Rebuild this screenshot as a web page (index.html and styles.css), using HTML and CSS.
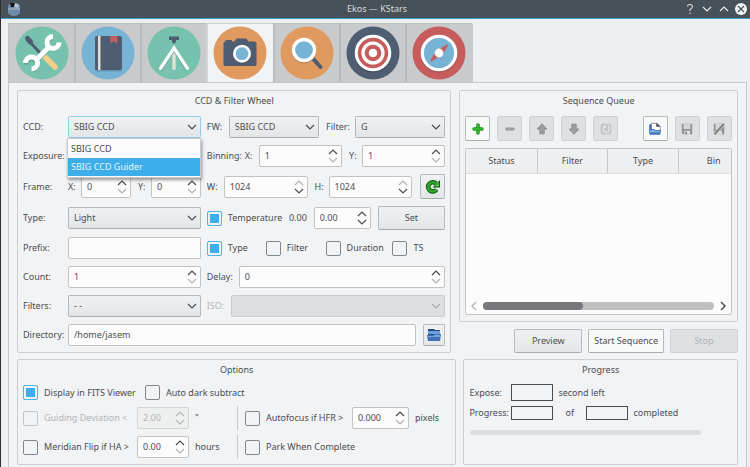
FILE: index.html
```html
<!DOCTYPE html>
<html lang="en">
<head>
<meta charset="utf-8">
<title>Ekos — KStars</title>
<link rel="stylesheet" href="styles.css">
</head>
<body>
<svg class="defs" aria-hidden="true">
  <symbol id="chevron" viewBox="0 0 10 6"><path d="M1 1l4 4 4-4" fill="none" stroke="currentColor" stroke-width="1.2"/></symbol>
  <symbol id="up" viewBox="0 0 10 6"><path d="M1 5l4-4 4 4" fill="none" stroke="currentColor" stroke-width="1.2"/></symbol>
</svg>
<div class="window">
  <header class="titlebar">
    <svg class="app-icon" viewBox="0 0 14 14"><path d="M1 3Q7-2 13 3V11Q11 14 7 14T1 11Z" fill="#6f8aa6"/><path d="M1 6h12v2H1z" fill="#8aa2ba"/><path d="M3 1l5 0-1 4-3 0z" fill="#10161c"/><path d="M8 1l4 2-1 3-4-1z" fill="#b4c2cf"/></svg>
    <h1>Ekos — KStars</h1>
    <div class="window-buttons">
      <button type="button" aria-label="Help"><svg viewBox="0 0 12 12"><path d="M3.500 3.500Q3.500 1.500 6 1.500T8.500 3.800Q8.500 5 6 6.500V8M6 9.500V11" fill="none" stroke="#d5d8da" stroke-width="1.100"/></svg></button>
      <button type="button" aria-label="Minimize"><svg viewBox="0 0 12 12"><path d="M2 4l4 4 4-4" fill="none" stroke="#e8eaeb" stroke-width="1.200"/></svg></button>
      <button type="button" aria-label="Maximize"><svg viewBox="0 0 12 12"><path d="M2 8l4-4 4 4" fill="none" stroke="#e8eaeb" stroke-width="1.200"/></svg></button>
      <button type="button" aria-label="Close"><svg viewBox="0 0 12 12"><circle cx="6" cy="6" r="6" fill="#f4f5f5"/><path d="M3 3l6 6M9 3l-6 6" stroke="#475057" stroke-width="1.200"/></svg></button>
    </div>
  </header>

  <nav class="tabs">
    <button type="button" class="tab" aria-label="Setup"><svg viewBox="0 0 54 54"><circle cx="27" cy="27" r="26.500" fill="#76c2af"/><path d="M12.500 12.500l3 4L25 27" fill="none" stroke="#4f5d73" stroke-width="3" stroke-linecap="round"/><path d="M12.500 12.500l3 3.500" stroke="#4f5d73" stroke-width="5" stroke-linecap="round"/><path d="M29 30L40 41" stroke="#f5cf87" stroke-width="5.500" stroke-linecap="round"/><g fill="none" stroke="#5fa896" stroke-width="5" transform="translate(0 1)"><path d="M38 11A5.500 5.500 0 1 0 43.500 16.500M34 21L21 34M16.500 43A5.500 5.500 0 1 0 11 37.500"/></g><g fill="none" stroke="#fff" stroke-width="5"><path d="M38 10.500A6 6 0 1 0 44 16.500M34 21L21 34M16.500 43A6 6 0 1 0 10.500 37"/></g></svg></button>
    <button type="button" class="tab" aria-label="Scheduler"><svg viewBox="0 0 54 54"><circle cx="27" cy="27" r="26.500" fill="#77b3d4"/><rect x="14" y="11" width="27" height="34.500" rx="2" fill="#6394b0"/><rect x="14" y="10" width="27" height="34" rx="2" fill="#4f5d73"/><path d="M17 10h2.500v34H17z" fill="#e0e0d1"/><path d="M29.300 10h7v8l-3.500-3-3.500 3z" fill="#c75c5c"/></svg></button>
    <button type="button" class="tab" aria-label="Mount"><svg viewBox="0 0 54 54"><circle cx="27" cy="27" r="26.500" fill="#76c2af"/><path d="M22 10.500h10v3.500h-3v2l-2 2-2-2v-2h-3z" fill="#4f5d73"/><path d="M25.300 25h3.400v18q-1.700 2-3.400 0z" fill="#e0e0d1"/><path d="M13.500 43.500L27 22.500 40.500 43.500" fill="none" stroke="#5fa896" stroke-width="3" transform="translate(0 1)"/><path d="M13.500 42.500L27 22 40.500 42.500" fill="none" stroke="#fff" stroke-width="3.200" stroke-linecap="round"/></svg></button>
    <button type="button" class="tab active" aria-label="Capture"><svg viewBox="0 0 54 54"><circle cx="27" cy="27" r="26.500" fill="#e0995e"/><path d="M10.500 17.500q0-2 2-2V14h6.500v1.500h2.500l2-3h10l2 3h6q2 0 2 2v21q0 1.500-2 1.500H12.500q-2 0-2-1.500z" fill="#4f5d73"/><circle cx="29" cy="28.500" r="9" fill="#3d495b"/><circle cx="29" cy="27.700" r="7.700" fill="#77b3d4" stroke="#fff" stroke-width="2.600"/></svg></button>
    <button type="button" class="tab" aria-label="Alignment"><svg viewBox="0 0 54 54"><circle cx="27" cy="27" r="26.500" fill="#e0995e"/><path d="M32.500 32L40.500 41" stroke="#4f5d73" stroke-width="4" stroke-linecap="round"/><circle cx="24" cy="25.200" r="12.200" fill="#b87e4e"/><circle cx="24" cy="24" r="10.500" fill="#77b3d4" stroke="#fff" stroke-width="3.400"/></svg></button>
    <button type="button" class="tab" aria-label="Guide"><svg viewBox="0 0 54 54"><circle cx="27" cy="27" r="26.500" fill="#4f5d73"/><circle cx="27" cy="28.200" r="18.300" fill="#3b4656"/><circle cx="27" cy="27" r="18.300" fill="#fff"/><circle cx="27" cy="27" r="15.200" fill="#c75c5c"/><circle cx="27" cy="27" r="11.600" fill="#fff"/><circle cx="27" cy="27" r="8.300" fill="#c75c5c"/><circle cx="27" cy="27" r="4.300" fill="#fff"/></svg></button>
    <button type="button" class="tab" aria-label="Focus"><svg viewBox="0 0 54 54"><circle cx="27" cy="27" r="26.500" fill="#c75c5c"/><circle cx="27" cy="28.200" r="18.300" fill="#a04c4c"/><circle cx="27" cy="27" r="16.700" fill="#77b3d4" stroke="#fff" stroke-width="3.200"/><path d="M36 18q0 3-6.500 11.500L18.500 36q0-3 6-11.500z" fill="#c75c5c"/><circle cx="27" cy="27" r="4.400" fill="#fff"/></svg></button>
  </nav>

  <main class="page">
    <div class="row-top">
      <section class="panel ccd">
        <h2>CCD &amp; Filter Wheel</h2>
        <div class="form">
          <label for="ccd">CCD:</label>
          <div class="combo-anchor">
            <span class="combo focus"><select id="ccd"><option>SBIG CCD</option><option>SBIG CCD Guider</option></select><svg><use href="#chevron"/></svg></span>
            <ul class="popup" role="listbox" aria-label="CCD">
              <li role="option">SBIG CCD</li>
              <li role="option" class="selected" aria-selected="true">SBIG CCD Guider</li>
            </ul>
          </div>
          <div class="cells filter-row">
            <label for="fw">FW:</label>
            <span class="combo"><select id="fw"><option>SBIG CCD</option></select><svg><use href="#chevron"/></svg></span>
            <label for="filter" class="mid">Filter:</label>
            <span class="combo"><select id="filter"><option>G</option></select><svg><use href="#chevron"/></svg></span>
          </div>

          <label for="exposure">Exposure:</label>
          <span class="spin"><input id="exposure" type="text"></span>
          <div class="cells binning-row">
            <span>Binning:</span>
            <label for="binx">X:</label>
            <span class="spin"><input id="binx" type="text" value="1"><span class="arrows"><svg><use href="#up"/></svg><svg class="off"><use href="#chevron"/></svg></span></span>
            <label for="biny" class="mid">Y:</label>
            <span class="spin"><input id="biny" type="text" value="1"><span class="arrows"><svg><use href="#up"/></svg><svg class="off"><use href="#chevron"/></svg></span></span>
          </div>

          <span>Frame:</span>
          <div class="cells xy-row">
            <label for="fx">X:</label>
            <span class="spin"><input id="fx" type="text" value="0"><span class="arrows"><svg><use href="#up"/></svg><svg class="off"><use href="#chevron"/></svg></span></span>
            <label for="fy" class="mid">Y:</label>
            <span class="spin"><input id="fy" type="text" value="0"><span class="arrows"><svg><use href="#up"/></svg><svg class="off"><use href="#chevron"/></svg></span></span>
          </div>
          <div class="cells size-row">
            <label for="w">W:</label>
            <span class="spin"><input id="w" type="text" value="1024"><span class="arrows"><svg class="off"><use href="#up"/></svg><svg><use href="#chevron"/></svg></span></span>
            <label for="h" class="mid">H:</label>
            <span class="spin"><input id="h" type="text" value="1024"><span class="arrows"><svg class="off"><use href="#up"/></svg><svg><use href="#chevron"/></svg></span></span>
            <button type="button" class="btn tool" aria-label="Reset frame"><svg viewBox="0 0 16 16"><path d="M11.500 10.500A4.600 4.600 0 1 1 11 4.500" fill="none" stroke="#0b5c0b" stroke-width="4.600"/><path d="M15 1v7.500H7.500z" fill="#0b5c0b"/><path d="M11.500 10.500A4.600 4.600 0 1 1 11 4.500" fill="none" stroke="#2fa52b" stroke-width="2.600"/><path d="M14 3v4.500H9.500z" fill="#4fc648"/></svg></button>
          </div>

          <label for="type">Type:</label>
          <span class="combo"><select id="type"><option>Light</option></select><svg><use href="#chevron"/></svg></span>
          <div class="cells temp-row">
            <div class="temp"><label class="check"><input type="checkbox" checked>Temperature</label><span>0.00</span></div>
            <span class="spin"><input type="text" value="0.00" aria-label="Target temperature"><span class="arrows"><svg><use href="#up"/></svg><svg><use href="#chevron"/></svg></span></span>
            <button type="button" class="btn">Set</button>
          </div>

          <label for="prefix">Prefix:</label>
          <span class="spin"><input id="prefix" type="text"></span>
          <div class="cells prefix-row">
            <label class="check"><input type="checkbox" checked>Type</label>
            <label class="check"><input type="checkbox">Filter</label>
            <label class="check"><input type="checkbox">Duration</label>
            <label class="check"><input type="checkbox">TS</label>
          </div>

          <label for="count">Count:</label>
          <span class="spin"><input id="count" type="text" value="1"><span class="arrows"><svg><use href="#up"/></svg><svg class="off"><use href="#chevron"/></svg></span></span>
          <div class="cells delay-row">
            <label for="delay">Delay:</label>
            <span class="spin"><input id="delay" type="text" value="0"><span class="arrows"><svg><use href="#up"/></svg><svg class="off"><use href="#chevron"/></svg></span></span>
          </div>

          <label for="filters">Filters:</label>
          <span class="combo"><select id="filters"><option>- -</option></select><svg><use href="#chevron"/></svg></span>
          <div class="cells iso-row">
            <label for="iso" class="disabled">ISO:</label>
            <span class="combo disabled"><select id="iso" disabled></select><svg><use href="#chevron"/></svg></span>
          </div>

          <label for="dir">Directory:</label>
          <div class="cells dir-row">
            <span class="spin"><input id="dir" type="text" value="/home/jasem"></span>
            <button type="button" class="btn tool small" aria-label="Browse"><svg viewBox="0 0 16 16"><path d="M2 3V2h6l1 1h5v9H2z" fill="#204a80"/><path d="M2 4h12v3H2z" fill="#6d9fdb"/><path d="M1 8h6l1-1h7l-1 7H2z" fill="#3f72b5"/><path d="M2 9h6l1-1h5v2H2z" fill="#78a7de"/></svg></button>
          </div>
        </div>
      </section>

      <div class="right-col">
        <section class="panel queue">
          <h2>Sequence Queue</h2>
          <div class="toolbar">
            <button type="button" class="btn tool" aria-label="Add job"><svg viewBox="0 0 16 16"><path d="M8 3.500v9M3.500 8h9" stroke="#168a12" stroke-width="4" stroke-linecap="round"/><path d="M8 3.500v9M3.500 8h9" stroke="#35b52c" stroke-width="2.400" stroke-linecap="round"/></svg></button>
            <button type="button" class="btn tool" disabled aria-label="Remove job"><svg viewBox="0 0 16 16"><path d="M4.500 8h7" stroke="#909294" stroke-width="3.400" stroke-linecap="round"/><path d="M4.500 8h7" stroke="#a9abad" stroke-width="1.400"/></svg></button>
            <button type="button" class="btn tool" disabled aria-label="Move up"><svg viewBox="0 0 16 16"><path d="M8 2l5.500 6H10.500v5.500h-5V8H2.500z" fill="#9c9ea0" stroke="#858789"/></svg></button>
            <button type="button" class="btn tool" disabled aria-label="Move down"><svg viewBox="0 0 16 16"><path d="M8 14L2.500 8H5.500V2.500h5V8h3z" fill="#9c9ea0" stroke="#858789"/></svg></button>
            <button type="button" class="btn tool" disabled aria-label="Reset jobs"><svg viewBox="0 0 16 16"><rect x="2" y="2" width="12" height="12" rx="2" fill="#c2c4c5"/><path d="M6 5.500A3.600 3.600 0 1 0 11 6V4" fill="none" stroke="#e4e5e6" stroke-width="1.600"/><path d="M4 4h4v4z" fill="#e4e5e6"/></svg></button>
            <button type="button" class="btn tool file" aria-label="Open sequence"><svg viewBox="0 0 16 16"><path d="M1.500 2.500h4V13h-4z" fill="#3b6cad"/><path d="M4 1.500h6l4 3.500v5H4z" fill="#fff" stroke="#7b8798"/><path d="M9.500 1v4.500H14z" fill="#333f50"/><path d="M1 8h6l1.500 1.500H15L14 14.500H2z" fill="#3f72b5"/><path d="M2 9h5l1.500 1.500H14V12H2z" fill="#84b0e5"/></svg></button>
            <button type="button" class="btn tool" disabled aria-label="Save sequence"><svg viewBox="0 0 16 16"><path d="M2 2h12v12H3.500L2 12.500z" fill="#909294"/><path d="M4 2h8v6H4z" fill="#d3d4d5"/><path d="M5 10h6.500v4H5z" fill="#dfe0e1"/><path d="M6 11h2v3H6z" fill="#858789"/></svg></button>
            <button type="button" class="btn tool" disabled aria-label="Save sequence as"><svg viewBox="0 0 16 16"><path d="M2 2h12v12H3.500L2 12.500z" fill="#909294"/><path d="M4 2h7v6H4z" fill="#d3d4d5"/><path d="M5 10h6.500v4H5z" fill="#dfe0e1"/><path d="M3 14L13 2.500" stroke="#dcdddd" stroke-width="4"/><path d="M3 14L13.500 2" stroke="#7f8183" stroke-width="2.200"/></svg></button>
          </div>
          <div class="table-box">
            <table><thead><tr><th>Status</th><th>Filter</th><th>Type</th><th>Bin</th></tr></thead></table>
            <div class="scroll">
              <svg class="off" viewBox="0 0 6 10"><path d="M5 1L1 5l4 4" fill="none" stroke="currentColor" stroke-width="1.300"/></svg>
              <div class="track"><div class="thumb"></div></div>
              <svg viewBox="0 0 6 10"><path d="M1 1l4 4-4 4" fill="none" stroke="currentColor" stroke-width="1.500"/></svg>
            </div>
          </div>
        </section>
        <div class="actions">
          <button type="button" class="btn">Preview</button>
          <button type="button" class="btn light">Start Sequence</button>
          <button type="button" class="btn" disabled>Stop</button>
        </div>
      </div>
    </div>

    <div class="row-bottom">
      <section class="panel options">
        <h2>Options</h2>
        <div class="opt-first">
          <label class="check"><input type="checkbox" checked>Display in FITS Viewer</label>
          <label class="check"><input type="checkbox">Auto dark subtract</label>
        </div>
        <div class="opt-row">
          <label class="check disabled"><input type="checkbox" disabled>Guiding Deviation &lt;</label>
          <span class="spin disabled"><input type="text" value="2.00" disabled aria-label="Guiding deviation"><span class="arrows"><svg><use href="#up"/></svg><svg><use href="#chevron"/></svg></span></span>
          <span class="unit">"</span>
          <label class="check ruled"><input type="checkbox">Autofocus if HFR &gt;</label>
          <span class="spin"><input type="text" value="0.000" aria-label="HFR limit"><span class="arrows"><svg><use href="#up"/></svg><svg class="off"><use href="#chevron"/></svg></span></span>
          <span class="unit">pixels</span>
        </div>
        <div class="opt-row">
          <label class="check"><input type="checkbox">Meridian Flip if HA &gt;</label>
          <span class="spin"><input type="text" value="0.00" aria-label="Hour angle limit"><span class="arrows"><svg><use href="#up"/></svg><svg class="off"><use href="#chevron"/></svg></span></span>
          <span class="unit">hours</span>
          <label class="check ruled">
            <input type="checkbox">Park When Complete</label>
        </div>
      </section>

      <section class="panel progress">
        <h2>Progress</h2>
        <div class="status"><span>Expose:</span><output class="expose"></output><span class="after">second left</span></div>
        <div class="status"><span>Progress:</span><output></output><span class="of">of</span><output></output><span class="after">completed</span></div>
        <progress value="0" max="100" aria-label="Sequence progress"></progress>
      </section>
    </div>
  </main>
</div>
</body>
</html>
```
FILE: styles.css
```css
* { box-sizing: border-box; }

body {
  margin: 0;
  background: #eeeff1;
  color: #4a4d50;
  font: 9px/12px "Noto Sans", "Open Sans", sans-serif;
}

input, select, button { font: inherit; color: inherit; margin: 0; min-width: 0; }
h1, h2 { margin: 0; font-size: inherit; font-weight: 400; text-align: center; }
svg { display: block; }
.defs { position: absolute; width: 0; height: 0; }

.window { min-height: 100vh; border-left: 1px solid #2b2d30; display: flex; flex-direction: column; }

/* Title bar */
.titlebar {
  display: grid;
  grid-template-columns: 1fr auto 1fr;
  align-items: center;
  height: 19px;
  padding: 0 3px 1px 6px;
  background: #485058;
  border-bottom: 1px solid #3a9bd0;
  color: #d9dcde;
}
.app-icon { width: 14px; height: 14px; }
.window-buttons { display: flex; gap: 5px; justify-content: flex-end; }
.window-buttons button { width: 12px; height: 12px; padding: 0; border: 0; background: none; }
.window-buttons svg { width: 12px; height: 12px; }

/* Module tabs */
.tabs { display: flex; margin: 4px 0 0 7px; }
.tab {
  display: flex;
  justify-content: center;
  padding: 2px 5px;
  border: 0;
  border-top: 1px solid #bbbdbf;
  border-left: 2px solid #b8babc;
  background: #c9cacc;
}
.tab:first-child { border-left-width: 1px; border-left-color: #bfc1c3; padding-left: 6px; }
.tab:last-child { border-radius: 0 2px 0 0; padding-right: 7px; }
.tab svg { width: 54px; height: 54px; }
.tab.active { background: #f2f3f5; border-left-color: #d5d6d8; border-top-color: #cfd0d2; margin-bottom: -1px; padding-right: 6px; }

.page {
  flex: 1;
  margin: 0 3px 0 7px;
  padding: 7px 8px 2px;
  border: 1px solid #c6c8ca;
  border-bottom: 0;
  background: #f2f3f5;
}
.row-top, .row-bottom { display: grid; }
.row-top { grid-template-columns: 435fr 279fr; gap: 8px; }
.row-bottom { grid-template-columns: 440fr 275fr; gap: 7px; margin-top: 6px; }
.right-col { display: flex; flex-direction: column; gap: 7px; min-width: 0; }

.panel { padding: 4px 5px 6px; border: 1px solid #cccecf; border-radius: 2px; min-width: 0; }
.panel h2 { margin-bottom: 9px; }

/* Camera form */
.form { display: grid; grid-template-columns: 45px 133fr 245fr; row-gap: 7px; align-items: center; }
.form > :nth-child(3n + 3) { margin-left: 6px; }
.form > .dir-row { grid-column: 2 / 4; margin-left: 0; }
.cells { display: grid; align-items: center; }
.mid { padding-left: 7px; }
.filter-row { grid-template-columns: 22px 1fr 36px 1fr; }
.binning-row { grid-template-columns: 38px 14px 1fr 20px 1fr; }
.xy-row { grid-template-columns: 13px 1fr 20px 1fr; }
.size-row { grid-template-columns: 17px 1fr 21px 1fr 33px; }
.size-row .btn { justify-self: end; }
.temp-row { grid-template-columns: 100px 57fr 68fr; column-gap: 7px; }
.temp { display: flex; justify-content: space-between; align-items: center; }
.prefix-row { grid-template-columns: 59fr 60fr 67fr 53fr; }
.delay-row { grid-template-columns: 32px 1fr; }
.iso-row { grid-template-columns: 24px 1fr; }
.dir-row { grid-template-columns: 1fr 22px; column-gap: 7px; }

/* Fields */
.spin, .combo { display: flex; align-items: center; position: relative; height: 22px; min-width: 0; }
.spin input, .combo select {
  appearance: none;
  width: 100%;
  height: 22px;
  padding: 0 14px 1px 5px;
  border: 1px solid #c1c3c5;
  border-radius: 2px;
  background: #fcfcfc;
  outline: 0;
}
.combo select {
  border-color: #b5b7b9;
  border-bottom-color: #a9abad;
  background: linear-gradient(#f0f1f2, #e4e5e7);
  opacity: 1;
}
.combo > svg { position: absolute; right: 4px; width: 10px; height: 6px; pointer-events: none; }
.combo.focus select { border-color: #93cee9; }
.combo.disabled { color: #a8aaac; }
.combo.disabled select { border-color: #c9cbcd; background: #dddee0; }
.arrows { position: absolute; right: 4px; display: flex; flex-direction: column; gap: 2px; color: #4a4d50; }
.arrows svg { width: 10px; height: 6px; }
.off { color: #b0b2b4; }
.disabled, .disabled .arrows { color: #b4b6b8; }
.spin.disabled input { background: #eeefef; border-color: #d2d4d5; color: #b4b6b8; }

.combo-anchor { position: relative; }
.popup {
  position: absolute;
  z-index: 1;
  top: 22px;
  left: -1px;
  right: 0;
  margin: 0;
  padding: 1px 0;
  border: 1px solid #c9cbcd;
  background: #fcfcfc;
  box-shadow: 1px 2px 3px rgba(0, 0, 0, 0.4);
  list-style: none;
}
.popup li { padding: 3px; line-height: 12px; }
.popup .selected { background: #3daee9; color: #e8f5fc; }

/* Check boxes */
.check { display: flex; align-items: center; gap: 6px; white-space: nowrap; }
.check input {
  appearance: none;
  flex: none;
  width: 15px;
  height: 15px;
  border: 1px solid #85878a;
  border-radius: 2px;
}
.check input:checked { border-color: #53b4e4; background: #3daee9; box-shadow: inset 0 0 0 2px #f2f3f5; }
.check input:disabled { border-color: #c3c5c7; }

/* Buttons */
.btn {
  height: 24px;
  padding: 0 5px 1px;
  border: 1px solid #b7b9bb;
  border-bottom-color: #a9abad;
  border-radius: 2px;
  background: linear-gradient(#f0f1f2, #e5e6e8);
  white-space: nowrap;
}
.btn:disabled { border-color: #cfd1d2; background: #dfe0e2; color: #b0b2b4; }
.btn.light { background: #f8f9f9; }
.tool { display: grid; place-items: center; width: 25px; height: 25px; padding: 0; }
.tool svg { width: 16px; height: 16px; }
.tool.small { width: 22px; height: 22px; }
.toolbar { display: flex; gap: 7px; margin-bottom: 7px; }
.toolbar .btn:first-child, .toolbar .file { background: #f7f8f8; }
.toolbar .file { margin-left: auto; }
.toolbar svg { width: 14px; height: 14px; }
.actions { display: flex; justify-content: flex-end; gap: 6px; }
.actions .btn { min-width: 68px; }

/* Queue table */
.queue { flex: 1; display: flex; flex-direction: column; }
.table-box {
  flex: 1;
  display: flex;
  flex-direction: column;
  justify-content: space-between;
  overflow: hidden;
  border: 1px solid #c3c5c7;
  border-radius: 2px;
  background: #fcfcfc;
}
table { width: 107%; table-layout: fixed; border-collapse: collapse; }
th {
  height: 24px;
  padding: 0;
  border-right: 1px solid #c6c8ca;
  border-bottom: 1px solid #dcddde;
  background: #eeeff1;
  font-weight: 400;
}
.scroll { display: flex; align-items: center; gap: 6px; padding: 0 5px 3px; }
.scroll svg { width: 6px; height: 10px; }
.track { flex: 1; height: 8px; border-radius: 4px; background: #bfc0c1; }
.thumb { width: 43%; height: 8px; border-radius: 4px; background: #77787b; }

/* Options */
.opt-first { display: grid; grid-template-columns: 122px 1fr; }
.opt-row {
  display: grid;
  grid-template-columns: 114px 52px 48px 115px 57px 1fr;
  align-items: center;
  margin-top: 7px;
}
.unit { padding-left: 6px; }
.ruled { height: 24px; margin: -1px 0; padding-left: 7px; border-left: 1px solid #c6c8ca; }

/* Progress */
.status { display: flex; align-items: center; height: 15px; margin-bottom: 5px; }
.status > span:first-child { width: 42px; }
.status output { width: 42px; height: 14px; border: 1px solid #4a4d50; }
.status .expose { height: 17px; }
.after { padding-left: 5px; }
.of { width: 33px; text-align: center; }
progress {
  appearance: none;
  display: block;
  width: 88%;
  height: 5px;
  margin: 10px 0 0 1px;
  border: 0;
  border-radius: 3px;
  overflow: hidden;
  background: #dcdddf;
}
progress::-webkit-progress-bar { background: #dcdddf; }
```
